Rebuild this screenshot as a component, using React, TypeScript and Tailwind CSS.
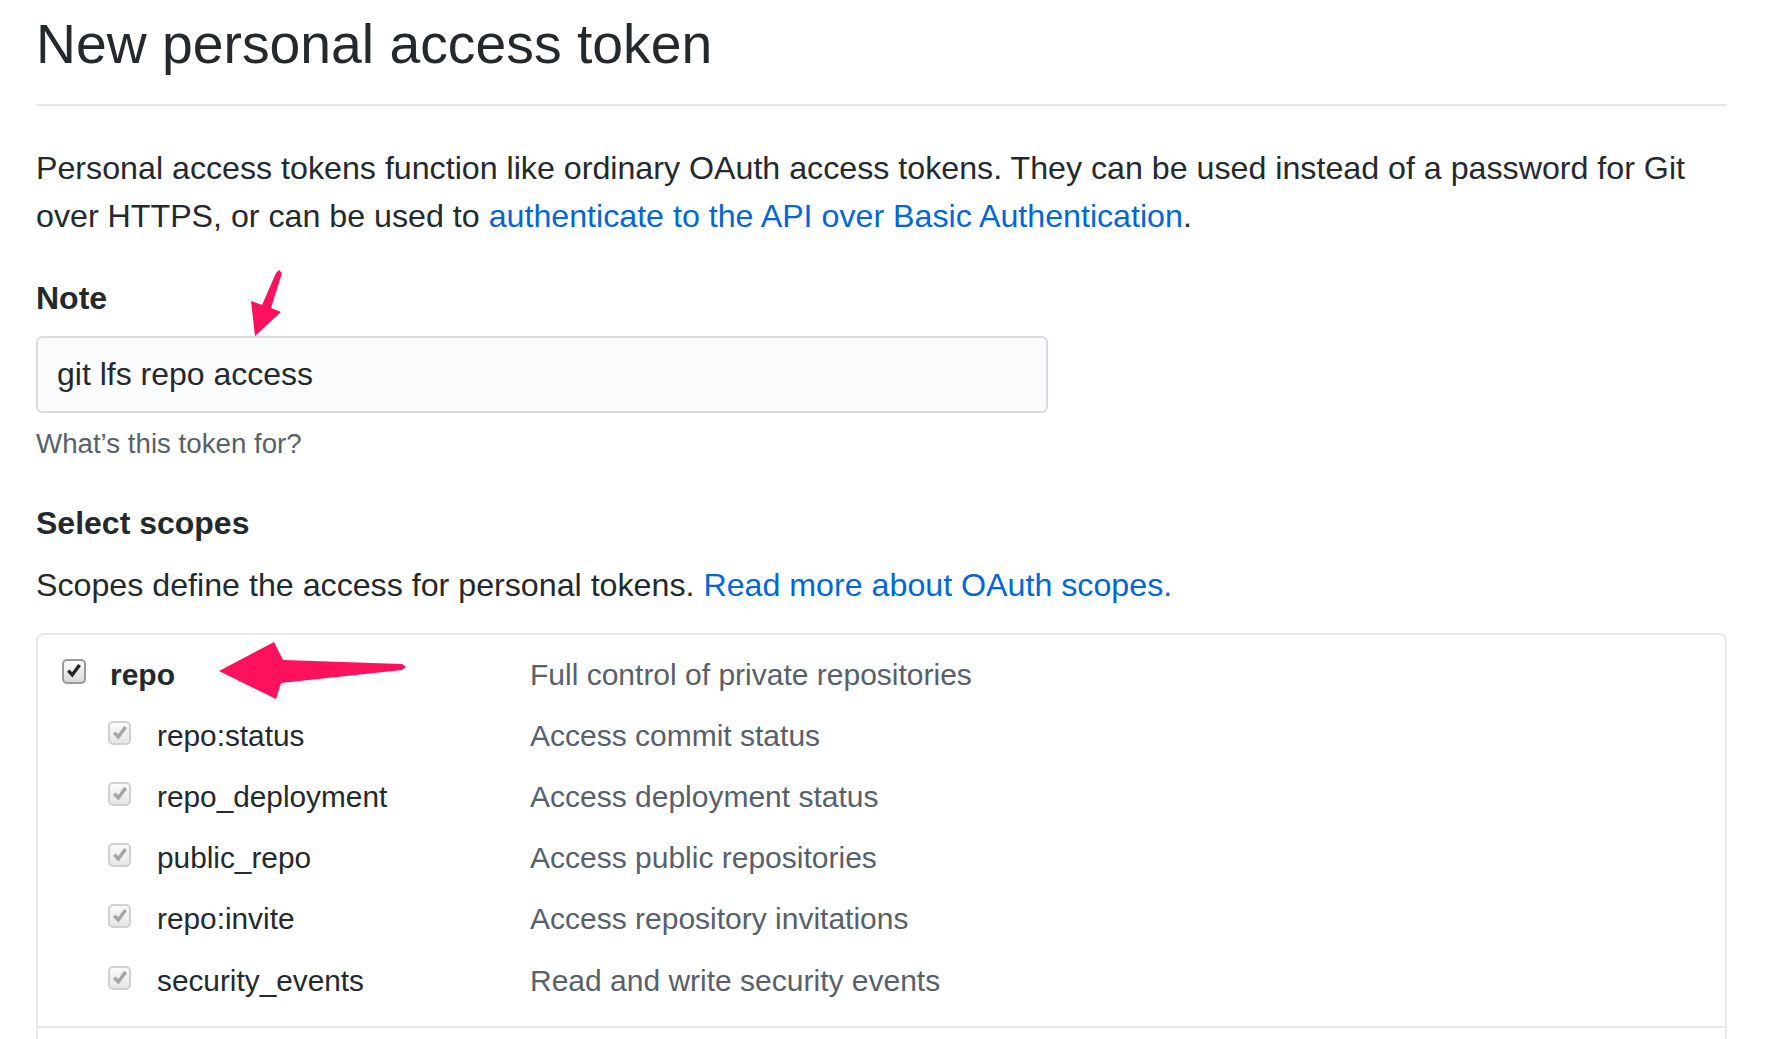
import React from "react";

type Scope = { name: string; desc: string; main?: boolean };

const scopes: Scope[] = [
  { name: "repo", desc: "Full control of private repositories", main: true },
  { name: "repo:status", desc: "Access commit status" },
  { name: "repo_deployment", desc: "Access deployment status" },
  { name: "public_repo", desc: "Access public repositories" },
  { name: "repo:invite", desc: "Access repository invitations" },
  { name: "security_events", desc: "Read and write security events" },
];

function Check({ main }: { main?: boolean }) {
  return (
    <span
      className={
        main
          ? "mt-[15px] flex h-[25px] w-[24px] shrink-0 items-center justify-center rounded-[5px] border-2 border-[#9a9a9a] bg-gradient-to-b from-[#ffffff] to-[#d9d9d9]"
          : "mt-[16px] flex h-[24px] w-[23px] shrink-0 items-center justify-center rounded-[5px] border-2 border-[#d0d0d0] bg-gradient-to-b from-[#fbfbfb] to-[#e6e6e6]"
      }
    >
      <svg width="16" height="16" viewBox="0 0 16 16">
        <path
          d="M1 8.8 L3.6 6.4 L6.1 9.2 L12.2 1 L15 3 L6.4 14.6 Z"
          fill={main ? "#262626" : "#a5a5a5"}
        />
      </svg>
    </span>
  );
}

export default function App() {
  return (
    <div
      className="relative h-[1039px] w-[1777px] overflow-hidden bg-white text-[#24292e]"
      style={{ fontFamily: '"Liberation Sans", Arial, Helvetica, sans-serif' }}
    >
      <div className="ml-[36px] flex w-[1691px] flex-col pt-[10px]">
        <div className="border-b-2 border-[#e4e7eb] pb-[26px]">
          <h1 className="text-[55.3px] font-normal leading-[68px] text-[#24292e]">
            New personal access token
          </h1>
        </div>

        <p className="mt-[39px] text-[32.2px] leading-[47.6px] text-[#24292e]">
          Personal access tokens function like ordinary OAuth access tokens. They can be used instead of a password for Git over HTTPS, or can be used to{" "}
          <a className="text-[#0366d6]">authenticate to the API over Basic Authentication</a>.
        </p>

        <div className="mt-[34px] text-[32px] font-bold leading-[48px] text-[#24292e]">Note</div>

        <div className="mt-[13.5px] flex h-[77px] w-[1012px] items-center rounded-[6px] border-2 border-[#d8dbdf] bg-[#fafbfc] pl-[19px] text-[32px] text-[#24292e]">
          git lfs repo access
        </div>

        <div className="mt-[11px] text-[27.7px] leading-[40px] text-[#586069]">What’s this token for?</div>

        <div className="mt-[35px] text-[32px] font-bold leading-[48px] text-[#24292e]">Select scopes</div>

        <p className="mt-[14px] text-[32.2px] leading-[48px] text-[#24292e]">
          Scopes define the access for personal tokens.{" "}
          <a className="text-[#0366d6]">Read more about OAuth scopes.</a>
        </p>

        <div className="mt-[24px] rounded-[8px] border-2 border-[#e6e8eb]">
          <div className="flex flex-col border-b-2 border-[#e6e8eb] pb-[15px] pl-[24px] pt-[9px]">
            {scopes.map((s) => (
              <div key={s.name} className="flex h-[61.2px] items-start">
                <div className={s.main ? "flex w-[468px] items-start" : "flex w-[468px] items-start pl-[46px]"}>
                  <Check main={s.main} />
                  <span
                    className={
                      s.main
                        ? "ml-[24px] text-[30px] font-bold leading-[61px] text-[#24292e]"
                        : "ml-[26px] text-[29.8px] leading-[61px] text-[#24292e]"
                    }
                  >
                    {s.name}
                  </span>
                </div>
                <span className="text-[30px] leading-[61px] text-[#586069]">{s.desc}</span>
              </div>
            ))}
          </div>
          <div className="h-[80px]" />
        </div>
      </div>

      <svg className="pointer-events-none absolute left-0 top-0" width="1777" height="1039" viewBox="0 0 1777 1039">
        <polygon
          points="276,273 279,270 282,273 271,308 281,312 255,336 251,301 262,305"
          fill="#fc125c"
        />
        <polygon
          points="219,671 274,642 283,660 402,664 406,667 402,670 281,683 276,699"
          fill="#fc125c"
        />
      </svg>
    </div>
  );
}
